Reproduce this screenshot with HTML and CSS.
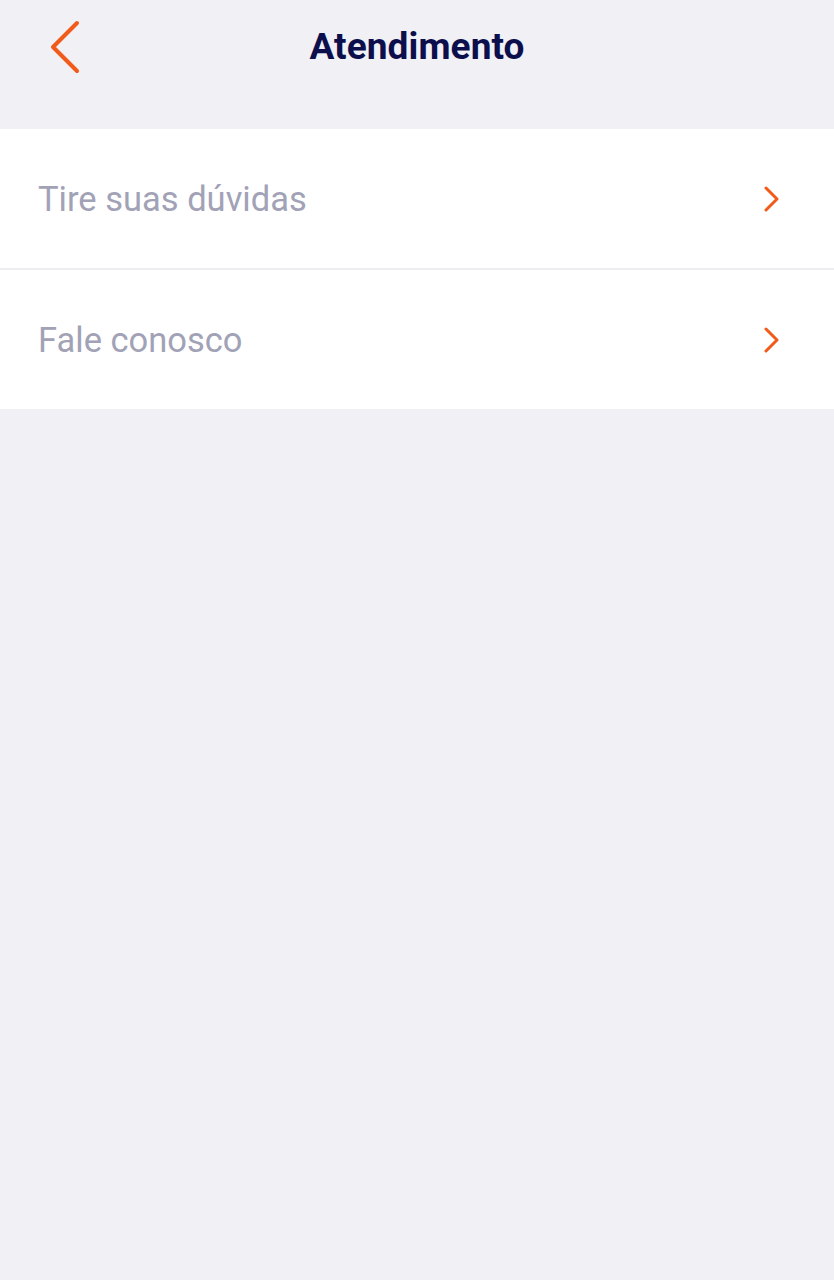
FILE: index.html
```html
<!DOCTYPE html>
<html lang="pt">
<head>
<meta charset="utf-8">
<title>Atendimento</title>
<link rel="stylesheet" href="styles.css">
</head>
<body>
<div class="app">
  <header class="topbar">
    <button class="back" aria-label="Voltar">
      <svg width="34" height="54" viewBox="0 0 34 54"><path d="M29 3 L5 27 L29 51" fill="none" stroke="#f25a1a" stroke-width="4" stroke-linecap="round" stroke-linejoin="round"/></svg>
    </button>
    <h1 class="title">Atendimento</h1>
  </header>
  <ul class="menu">
    <li class="item">
      <span class="label">Tire suas dúvidas</span>
      <svg class="chev" width="20" height="26" viewBox="0 0 20 26"><path d="M4 2 L15 13 L4 24" fill="none" stroke="#f25a1a" stroke-width="3" stroke-linecap="round" stroke-linejoin="round"/></svg>
    </li>
    <li class="item">
      <span class="label">Fale conosco</span>
      <svg class="chev" width="20" height="26" viewBox="0 0 20 26"><path d="M4 2 L15 13 L4 24" fill="none" stroke="#f25a1a" stroke-width="3" stroke-linecap="round" stroke-linejoin="round"/></svg>
    </li>
  </ul>
</div>
</body>
</html>
```
FILE: styles.css
```css
html, body {
  margin: 0;
  padding: 0;
  background: #f0f0f5;
  font-family: Roboto, "Liberation Sans", sans-serif;
}
.app {
  width: 834px;
  min-height: 1280px;
  background: #f0f0f5;
}
.topbar {
  position: relative;
  height: 129px;
  display: flex;
  justify-content: center;
  box-sizing: border-box;
  padding-top: 23px;
}
.back {
  position: absolute;
  left: 48px;
  top: 20px;
  border: 0;
  background: none;
  padding: 0;
  width: 34px;
  height: 54px;
}
.back svg { display: block; }
.title {
  margin: 0;
  font-size: 37px;
  font-weight: 700;
  color: #0c0f4c;
  line-height: 48px;
  letter-spacing: 0.1px;
}
.menu {
  list-style: none;
  margin: 0;
  padding: 0;
  background: #ffffff;
}
.item {
  height: 139px;
  display: flex;
  align-items: center;
  justify-content: space-between;
  padding: 0 52px 0 38px;
}
.item + .item {
  border-top: 2px solid #ececf1;
}
.label {
  font-size: 34.5px;
  color: #a2a2b6;
}
.chev { display: block; }
```
